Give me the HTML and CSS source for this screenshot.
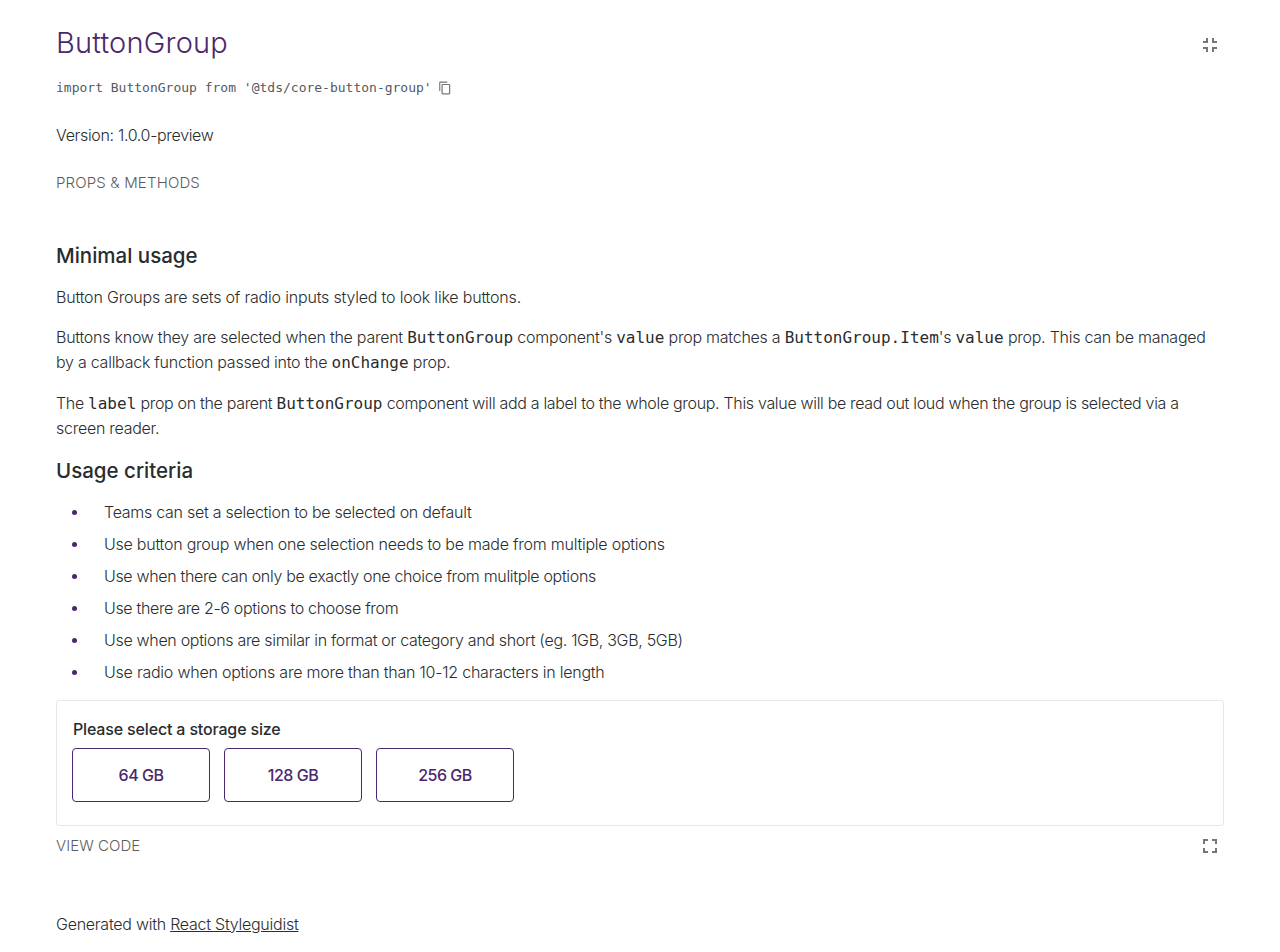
FILE: index.html
```html
<!DOCTYPE html>
<html lang="en">
<head>
<meta charset="utf-8">
<title>ButtonGroup</title>
<link rel="stylesheet" href="styles.css">
</head>
<body>
<main class="page">
  <header class="header">
    <h1 class="title">ButtonGroup</h1>
    <svg class="icon" width="24" height="24" viewBox="0 0 24 24"><path d="M5 16h3v3h2v-5H5v2zm3-8H5v2h5V5H8v3zm6 11h2v-3h3v-2h-5v5zm2-11V5h-2v5h5V8h-3z"/></svg>
  </header>
  <div class="import">
    <span>import ButtonGroup from '@tds/core-button-group'</span>
    <svg class="copy" width="14" height="14" viewBox="0 0 40 40"><path d="M31.6 35v-23.4h-18.2v23.4h18.2z m0-26.6c1.8 0 3.4 1.4 3.4 3.2v23.4c0 1.8-1.6 3.4-3.4 3.4h-18.2c-1.8 0-3.4-1.6-3.4-3.4v-23.4c0-1.8 1.6-3.2 3.4-3.2h18.2z m-5-6.8v3.4h-20v23.4h-3.2v-23.4c0-1.8 1.4-3.4 3.2-3.4h20z"/></svg>
  </div>
  <p class="version">Version: 1.0.0-preview</p>
  <div class="tab props">PROPS &amp; METHODS</div>

  <h2 class="heading">Minimal usage</h2>
  <p class="text intro">Button Groups are sets of radio inputs styled to look like buttons.</p>
  <p class="text">Buttons know they are selected when the parent <code>ButtonGroup</code> component's <code>value</code> prop matches a <code>ButtonGroup.Item</code>'s <code>value</code> prop. This can be managed<br>by a callback function passed into the <code>onChange</code> prop.</p>
  <p class="text last">The <code>label</code> prop on the parent <code>ButtonGroup</code> component will add a label to the whole group. This value will be read out loud when the group is selected via a<br><span class="tail">screen reader.</span></p>
  <h2 class="heading usage">Usage criteria</h2>
  <ul class="list">
    <li>Teams can set a selection to be selected on default</li>
    <li>Use button group when one selection needs to be made from multiple options</li>
    <li>Use when there can only be exactly one choice from mulitple options</li>
    <li>Use there are 2-6 options to choose from</li>
    <li>Use when options are similar in format or category and short (eg. 1GB, 3GB, 5GB)</li>
    <li>Use radio when options are more than than 10-12 characters in length</li>
  </ul>
  <section class="preview">
    <div class="label">Please select a storage size</div>
    <div class="buttons">
      <div class="button">64 GB</div>
      <div class="button">128 GB</div>
      <div class="button">256 GB</div>
    </div>
  </section>
  <div class="toolbar">
    <div class="tab code-tab">VIEW CODE</div>
    <svg class="icon" width="24" height="24" viewBox="0 0 24 24"><path d="M7 14H5v5h5v-2H7v-3zm-2-4h2V7h3V5H5v5zm12 7h-3v2h5v-5h-2v3zM14 5v2h3v3h2V5h-5z"/></svg>
  </div>
  <footer class="footer">Generated with <a>React Styleguidist</a></footer>
</main>
</body>
</html>
```
FILE: styles.css
```css
* { box-sizing: border-box; }
body { margin: 0; background: #fff; color: #2a2c2e; font-family: Inter, "Liberation Sans", sans-serif; font-size: 16px; font-weight: 300; letter-spacing: -0.25px; }
.page { padding: 23px 56px 0; height: 952px; overflow: hidden; }
.header { display: flex; justify-content: space-between; align-items: flex-start; height: 41px; padding-right: 2px; }
.title { margin: 0; color: #4b286d; font-size: 29px; font-weight: 300; line-height: 40px; letter-spacing: 0.2px; }
.icon { fill: #767676; display: block; }
.header .icon { margin-top: 10px; }
.import { display: flex; align-items: center; gap: 6px; height: 20px; margin-top: 14px; color: #54595f; font: 13px/20px "DejaVu Sans Mono", monospace; letter-spacing: 0; }
.copy { fill: #767676; }
.version { margin: 25px 0 0; line-height: 24px; letter-spacing: -0.33px; }
.tab { color: #5c5c5c; font-size: 15px; line-height: 20px; letter-spacing: 0.07px; }
.props { margin-top: 26px; letter-spacing: 0.15px; }
.heading { margin: 49px 0 0; font-size: 20.5px; font-weight: 500; line-height: 28px; letter-spacing: 0; }
.text { margin: 15px 0 0; line-height: 25px; white-space: nowrap; }
.text code { font: 16px/1 "DejaVu Sans Mono", monospace; letter-spacing: 0; }
.intro { letter-spacing: -0.19px; }
.last { margin-top: 16px; letter-spacing: -0.32px; }
.tail { letter-spacing: -0.27px; }
.usage { margin-top: 16px; }
.list { list-style: none; margin: 15px 0 0; padding: 0; display: grid; gap: 8px; }
.list li { display: flex; align-items: center; line-height: 24px; letter-spacing: -0.27px; white-space: nowrap; }
.list li:nth-child(2) { letter-spacing: -0.24px; }
.list li:nth-child(3), .list li:nth-child(4) { letter-spacing: -0.33px; }
.list li:nth-child(5) { letter-spacing: -0.31px; }
.list li:nth-child(6) { letter-spacing: -0.23px; }
.list li::before { content: ""; width: 5px; height: 5px; margin: 0 27px 0 16px; border-radius: 50%; background: #4b286d; }
.preview { height: 126px; margin-top: 16px; padding: 16px 15px; border: 1px solid #e8e8e8; border-radius: 3px; }
.label { padding-left: 1px; font-weight: 500; line-height: 24px; letter-spacing: -0.16px; }
.buttons { display: flex; gap: 14px; margin-top: 7px; }
.button { width: 138px; height: 54px; border: 1px solid #4b286d; border-radius: 4px; color: #4b286d; font-weight: 500; line-height: 52px; letter-spacing: -0.5px; text-align: center; }
.toolbar { display: flex; justify-content: space-between; align-items: center; height: 40px; padding-right: 2px; }
.footer { margin-top: 46px; line-height: 24px; }
.footer a { text-decoration: underline; }
```
